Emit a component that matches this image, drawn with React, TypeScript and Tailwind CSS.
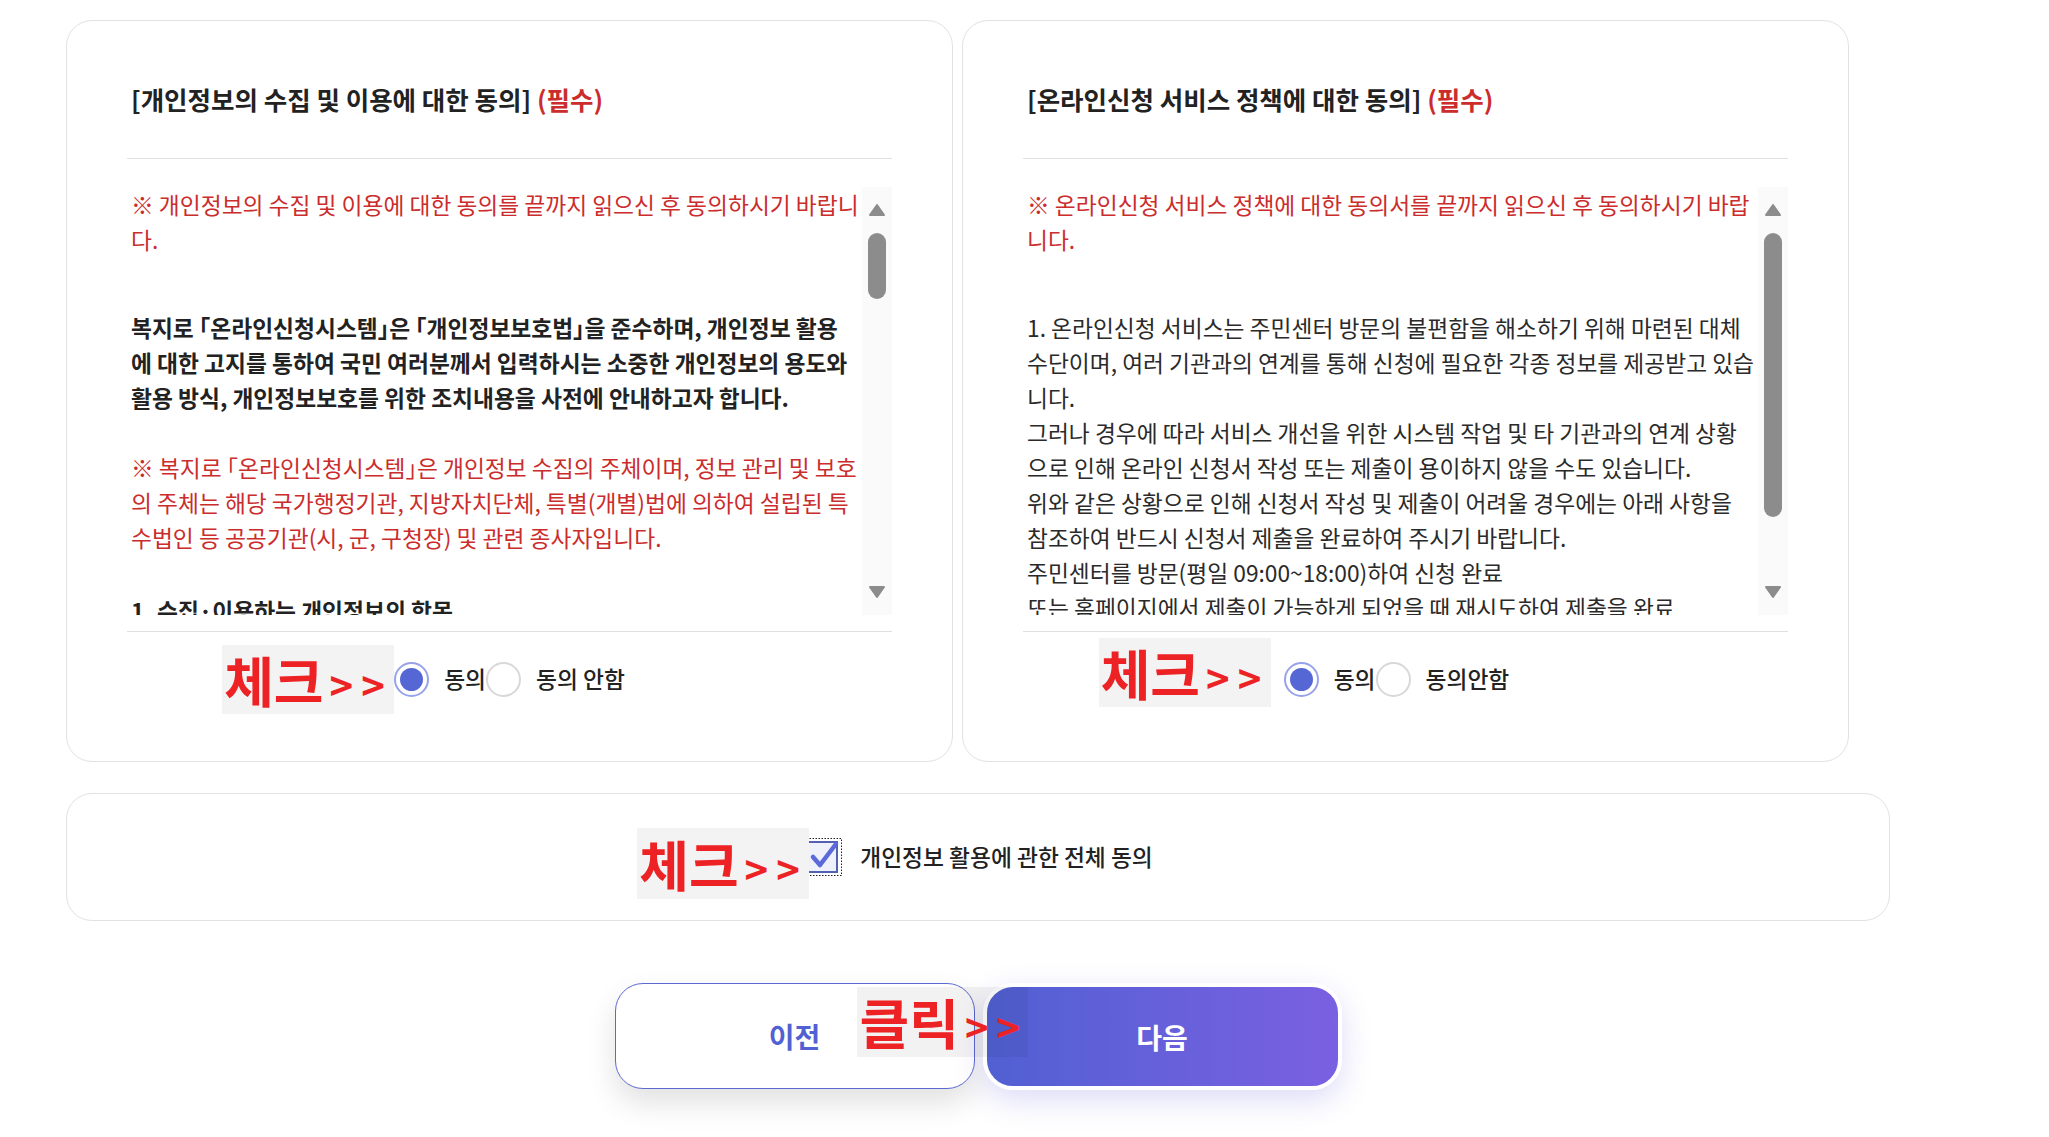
import React from "react";

// Agreement step: two consent cards, one "agree to all" row and prev/next buttons
type Para = { lines: string[]; tone: "red" | "bold" | "plain"; gap?: string };

const leftParas: Para[] = [
  {
    tone: "red",
    lines: ["※ 개인정보의 수집 및 이용에 대한 동의를 끝까지 읽으신 후 동의하시기 바랍니", "다."],
  },
  {
    tone: "bold",
    gap: "mt-[53px]",
    lines: [
      "복지로 「온라인신청시스템」은 「개인정보보호법」을 준수하며, 개인정보 활용",
      "에 대한 고지를 통하여 국민 여러분께서 입력하시는 소중한 개인정보의 용도와",
      "활용 방식, 개인정보보호를 위한 조치내용을 사전에 안내하고자 합니다.",
    ],
  },
  {
    tone: "red",
    gap: "mt-[35px]",
    lines: [
      "※ 복지로 「온라인신청시스템」은 개인정보 수집의 주체이며, 정보 관리 및 보호",
      "의 주체는 해당 국가행정기관, 지방자치단체, 특별(개별)법에 의하여 설립된 특",
      "수법인 등 공공기관(시, 군, 구청장) 및 관련 종사자입니다.",
    ],
  },
  { tone: "bold", gap: "mt-[38px]", lines: ["1. 수집·이용하는 개인정보의 항목"] },
];

const rightParas: Para[] = [
  {
    tone: "red",
    lines: ["※ 온라인신청 서비스 정책에 대한 동의서를 끝까지 읽으신 후 동의하시기 바랍", "니다."],
  },
  {
    tone: "plain",
    gap: "mt-[53px]",
    lines: [
      "1. 온라인신청 서비스는 주민센터 방문의 불편함을 해소하기 위해 마련된 대체",
      "수단이며, 여러 기관과의 연계를 통해 신청에 필요한 각종 정보를 제공받고 있습",
      "니다.",
      "그러나 경우에 따라 서비스 개선을 위한 시스템 작업 및 타 기관과의 연계 상황",
      "으로 인해 온라인 신청서 작성 또는 제출이 용이하지 않을 수도 있습니다.",
      "위와 같은 상황으로 인해 신청서 작성 및 제출이 어려울 경우에는 아래 사항을",
      "참조하여 반드시 신청서 제출을 완료하여 주시기 바랍니다.",
      "주민센터를 방문(평일 09:00~18:00)하여 신청 완료",
      "또는 홈페이지에서 제출이 가능하게 되었을 때 재시도하여 제출을 완료",
    ],
  },
];

const toneClass = {
  red: "text-[#cb2c2c]",
  bold: "text-[#222] font-bold",
  plain: "text-[#2a2a2a]",
};

const Scrollbar: React.FC<{ thumbClass: string }> = ({ thumbClass }) => (
  <div className="w-[30px] shrink-0 bg-[#fafafa] flex flex-col items-center pt-[16px] pb-[16px]">
    <svg width="18" height="14" viewBox="0 0 18 14">
      <path d="M9 2 L16 12 H2 Z" fill="#8c8c8c" stroke="#8c8c8c" strokeWidth="2" strokeLinejoin="round" />
    </svg>
    <div className={`mt-[16px] w-[18px] rounded-full bg-[#8c8c8c] ${thumbClass}`} />
    <div className="flex-1" />
    <svg width="18" height="14" viewBox="0 0 18 14">
      <path d="M9 12 L16 2 H2 Z" fill="#8c8c8c" stroke="#8c8c8c" strokeWidth="2" strokeLinejoin="round" />
    </svg>
  </div>
);

// red "체크>>" / "클릭>>" hint pasted over the page
const Callout: React.FC<{ word: string; className: string }> = ({ word, className }) => (
  <div className={`absolute flex items-center text-[#ed2224] ${className}`}>
    <span className="text-[54px] font-bold leading-none">{word}</span>
    <span className="text-[40px] font-bold leading-none ml-[6px] mt-[8px]">&gt;</span>
    <span className="text-[40px] font-bold leading-none ml-[8px] mt-[8px]">&gt;</span>
  </div>
);

const Radio: React.FC<{ on?: boolean }> = ({ on }) =>
  on ? (
    <span className="w-[35px] h-[35px] rounded-full border-2 border-[#98a2ea] bg-white flex items-center justify-center shrink-0">
      <span className="w-[23px] h-[23px] rounded-full bg-[#5567d5]" />
    </span>
  ) : (
    <span className="w-[35px] h-[35px] rounded-full border-2 border-[#d8d8d8] bg-white shrink-0" />
  );

interface CardProps {
  title: string;
  paras: Para[];
  thumbClass: string;
  noLabel: string;
  calloutClass: string;
  groupClass: string;
}

const AgreeCard: React.FC<CardProps> = ({ title, paras, thumbClass, noLabel, calloutClass, groupClass }) => (
  <div className="w-[887px] h-[742px] border border-[#e2e2e2] rounded-[26px] px-[60px] pt-[60px] bg-white">
    <h2 className="pl-[4px] text-[25.5px] leading-[36px] font-bold text-[#222]">
      {title} <span className="text-[#cb2c2c]">(필수)</span>
    </h2>
    <div className="mt-[41px] h-px bg-[#e0e0e0]" />

    <div className="mt-[28px] h-[428px] flex">
      <div className="flex-1 overflow-hidden pl-[4px] text-[22.75px] leading-[35px] whitespace-nowrap [font-feature-settings:'halt']">
        {paras.map((p, i) => (
          <div key={i} className={`${toneClass[p.tone]} ${p.gap ?? ""}`}>
            {p.lines.map((l, j) => (
              <div key={j}>{l}</div>
            ))}
          </div>
        ))}
      </div>
      <Scrollbar thumbClass={thumbClass} />
    </div>

    <div className="mt-[16px] h-px bg-[#e0e0e0]" />

    <div className={`mt-[30px] flex justify-center ${groupClass}`}>
      <div className="relative flex items-center text-[22.75px] text-[#222] font-medium">
        <Callout word="체크" className={`right-full bg-[#f3f3f3] h-[69px] w-[172px] pl-[2px] ${calloutClass}`} />
        <Radio on />
        <span className="ml-[15px]">동의</span>
        <Radio />
        <span className="ml-[15px]">{noLabel}</span>
      </div>
    </div>
  </div>
);

const CheckBox: React.FC = () => (
  <svg width="40" height="38" viewBox="0 0 40 38" className="shrink-0">
    <rect x="0.5" y="0.5" width="38" height="37" fill="none" stroke="#222" strokeDasharray="1.5 1.5" />
    <rect x="4" y="4" width="30" height="30" fill="#eef0fa" stroke="#5361b4" strokeWidth="2" />
    <path d="M10 19 L17 27 L33 6" fill="none" stroke="#5b69da" strokeWidth="4.5" strokeLinecap="round" strokeLinejoin="round" />
  </svg>
);

export default function App() {
  return (
    <div className="min-h-screen bg-white font-['Noto_Sans_CJK_KR','Noto_Sans',sans-serif] pt-[20px] pl-[66px]">
      <div className="w-[1824px]">
        <div className="flex gap-[9px]">
          <AgreeCard
            title="[개인정보의 수집 및 이용에 대한 동의]"
            paras={leftParas}
            thumbClass="h-[66px]"
            noLabel="동의 안함"
            calloutClass="top-[-17px]"
            groupClass=""
          />
          <AgreeCard
            title="[온라인신청 서비스 정책에 대한 동의]"
            paras={rightParas}
            thumbClass="h-[284px]"
            noLabel="동의안함"
            calloutClass="top-[-24px] mr-[13px]"
            groupClass="pr-[18px]"
          />
        </div>

        {/* agree to all */}
        <div className="mt-[31px] h-[128px] border border-[#e2e2e2] rounded-[26px] flex items-center justify-center">
          <div className="relative flex items-center">
            <Callout word="체크" className="right-full mr-[-6px] top-[-10px] bg-[#f3f3f3] h-[71px] w-[172px] pl-[2px]" />
            <CheckBox />
            <span className="ml-[17px] text-[22.75px] font-medium text-[#222]">개인정보 활용에 관한 전체 동의</span>
          </div>
        </div>

        {/* prev / next */}
        <div className="mt-[62px] flex justify-center">
          <div className="relative flex gap-[8px]">
            <button className="w-[360px] h-[106px] rounded-[28px] border border-[#5b6ad0] bg-white text-[#5160d2] text-[28px] font-bold shadow-[0_14px_30px_rgba(0,0,0,0.12)]">
              이전
            </button>
            <button className="w-[359px] h-[107px] rounded-[30px] border-4 border-white bg-gradient-to-r from-[#5060d2] to-[#7a60e2] text-white text-[28px] font-bold shadow-[0_10px_30px_rgba(100,90,220,0.22)]">
              다음
            </button>
            <Callout word="클릭" className="left-[242px] top-[4px] h-[70px] w-[171px] pl-[3px] bg-black/5" />
          </div>
        </div>
      </div>
    </div>
  );
}
